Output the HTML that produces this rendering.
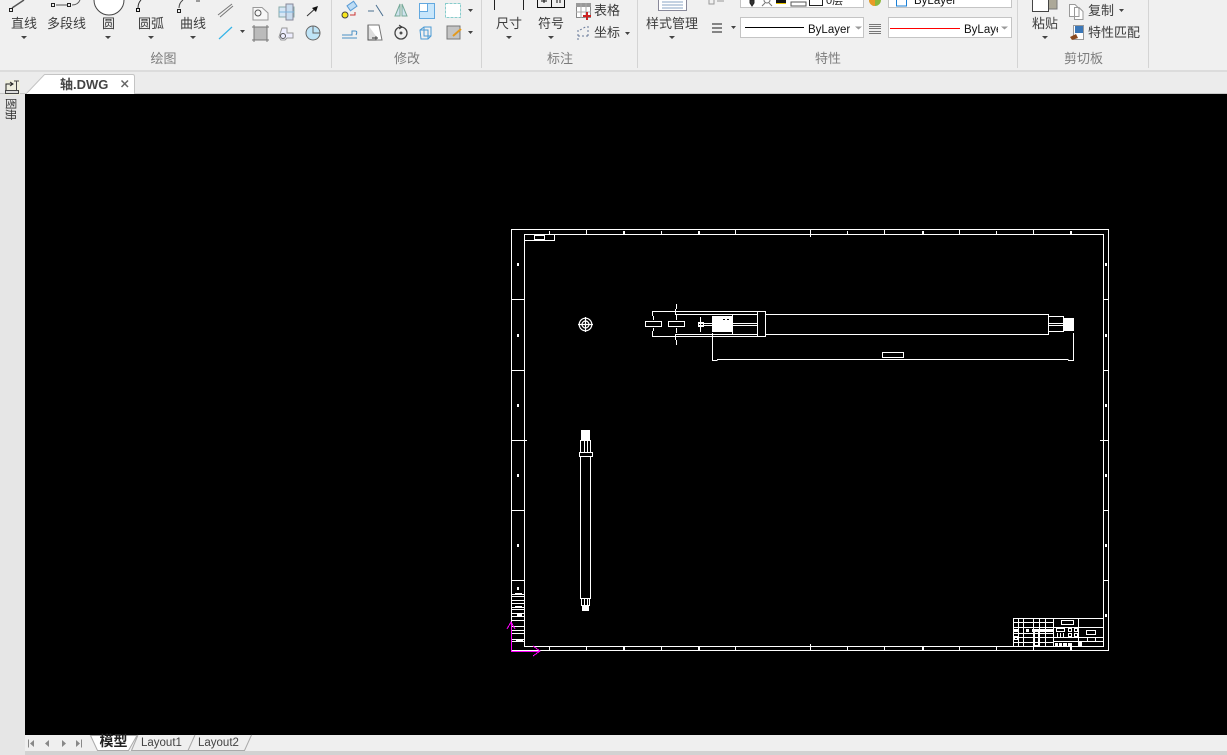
<!DOCTYPE html>
<html><head><meta charset="utf-8"><style>
html,body{margin:0;padding:0;width:1227px;height:755px;overflow:hidden;background:#f0f0f0}
svg{position:absolute;left:0;top:0;display:block}
text{font-family:"Liberation Sans","Noto Sans CJK SC",sans-serif;font-size:13px;fill:#3c3c3c}
.c{text-anchor:middle}
.g{fill:#7c7c7c}
</style></head><body>
<svg width="1227" height="755" viewBox="0 0 1227 755">
<rect width="1227" height="755" fill="#f0f0f0"/>
<!-- strip areas -->
<rect x="0" y="70" width="1227" height="2" fill="#dcdcdc"/>
<rect x="0" y="72" width="1227" height="22" fill="#ececec"/>
<rect x="0" y="94" width="25" height="661" fill="#e6e6e6"/>
<rect x="25" y="94" width="1202" height="641" fill="#000"/>
<rect x="25" y="735" width="1202" height="16" fill="#efefef"/>
<rect x="25" y="751" width="1202" height="4" fill="#d2d2d2"/>
<rect x="0" y="93" width="1227" height="1" fill="#c8c8c8"/>
<!-- separators -->
<g fill="#d4d4d4"><rect x="331" y="0" width="1" height="68"/><rect x="481" y="0" width="1" height="68"/><rect x="637" y="0" width="1" height="68"/><rect x="1017" y="0" width="1" height="68"/><rect x="1148" y="0" width="1" height="68"/></g>

<!-- labels -->
<text x="24" y="28" class="c">直线</text><text x="66.500" y="28" class="c">多段线</text><text x="108.500" y="28" class="c">圆</text><text x="151" y="28" class="c">圆弧</text><text x="193" y="28" class="c">曲线</text>
<text x="163.500" y="63" class="c g">绘图</text><text x="407" y="63" class="c g">修改</text><text x="560" y="63" class="c g">标注</text><text x="828" y="63" class="c g">特性</text><text x="1083.500" y="63" class="c g">剪切板</text>
<text x="509" y="28" class="c">尺寸</text><text x="551" y="28" class="c">符号</text><text x="672" y="28" class="c">样式管理</text><text x="1045" y="28" class="c">粘贴</text>
<text x="594" y="15">表格</text><text x="594" y="37">坐标</text><text x="1088" y="15">复制</text><text x="1088" y="37">特性匹配</text>

<!-- small arrows -->
<g fill="#444">
<path d="M21 36h6l-3 3zM105 36h6l-3 3zM148 36h6l-3 3zM190 36h6l-3 3zM240 30h5l-2.500 3zM468 9h5l-2.500 3zM468 31h5l-2.500 3zM506 36h6l-3 3zM548 36h6l-3 3zM625 32h5l-2.500 3zM669 36h6l-3 3zM731 26h5l-2.500 3zM1042 36h6l-3 3zM1119 9h5l-2.500 3z"/>
</g>

<!-- draw icons -->
<g fill="none" stroke="#555" stroke-width="1">
<path d="M12 8 L24 0" stroke-width="1.500"/><rect x="9.500" y="8.500" width="3" height="3" stroke="#222"/>
<path d="M56 5H68M72 5Q78 5 80 0" /><rect x="51.500" y="3.500" width="3" height="3" stroke="#222"/><rect x="67.500" y="3.500" width="3" height="3" stroke="#222"/>
<path d="M94 0A15 15 0 0 0 124 0" fill="#fff" stroke="#444"/>
<path d="M138 8Q138 3 141 0" stroke="#333"/><rect x="136.500" y="8.500" width="3" height="3" stroke="#111"/>
<path d="M179 8Q179 3 183 0M196 1H200" stroke="#444"/><rect x="177.500" y="9.500" width="3" height="3" stroke="#222"/>
<path d="M218 15L232 4M220 17L233 6" stroke="#777"/>
<path d="M219 39L232 27" stroke="#35b4e8" stroke-width="1.200"/>
<path d="M253 7.500H262L268 13V20H253Z" stroke="#999" fill="#f7f7f7"/><circle cx="258" cy="13" r="3"/>
<rect x="254" y="27" width="13" height="13" fill="#bbb" stroke="#777"/><path d="M252 27H269M252 40H269M254 25V42M267 25V42" stroke="#777"/>
<rect x="279" y="7" width="15" height="10" fill="#d6e6f5" stroke="#8aa"/><rect x="286" y="4" width="7" height="16" fill="#c9dcee" stroke="#889"/><path d="M279 12H294" stroke="#7ab6e0"/>
<path d="M282 28H287V33H293V38H287L285 40H281L279 37Z" fill="#eef" stroke="#999"/><circle cx="283" cy="36" r="2.500"/>
<path d="M307 16L317 7" stroke="#333"/><path d="M318 6L312 8L316 12Z" fill="#111" stroke="none"/>
<circle cx="313" cy="33" r="7" fill="#bfe4f7" stroke="#666"/><path d="M313 26V33H320" stroke="#666"/>
<!-- modify -->
<rect x="348" y="3" width="8" height="6" fill="#bcdcf5" stroke="#5a9bd5" transform="rotate(-35 352 6)"/><circle cx="345" cy="15" r="3" fill="#f8e71c" stroke="#444"/><path d="M350 15H355V12" stroke="#c33"/>
<path d="M368 11H374M376 5L383 16" stroke="#4a6f90"/>
<path d="M400 4L395 16H400ZM402 4L407 16H402Z" stroke="#7a9" fill="#cfe3ee"/>
<rect x="419.500" y="3.500" width="15" height="15" fill="#c8e6fb" stroke="#62a8df"/><rect x="419.500" y="3.500" width="8" height="8" fill="#fff" stroke="#62a8df"/>
<rect x="445.500" y="3.500" width="15" height="14" fill="#fff" stroke="#8cc" stroke-dasharray="3 1"/>
<path d="M342 38H357M342 35H352V31H355Q358 31 356 35" stroke="#4a8fc4"/>
<path d="M368 25H379L382 40H368Z" stroke="#777" fill="#fff"/><path d="M368 25V40H376V36" stroke="#555" fill="#ddd"/><path d="M372 38H378" stroke="#333"/>
<circle cx="401" cy="33" r="6" stroke="#444" stroke-width="1.300"/><circle cx="401" cy="33" r="1" fill="#333"/><path d="M399 25L402 27L399 29" stroke="#333"/>
<path d="M420 30L424 27H431V36L428 39H421ZM424 27V36H431M420 30H428V39" stroke="#4a9ad4"/>
<rect x="447" y="26" width="13" height="13" fill="#c4c4c4" stroke="#777"/><path d="M453 36L461 29" stroke="#e39a1e" stroke-width="2"/>
<!-- dim -->
<path d="M494.500 0V10M523.500 0V10" stroke="#222"/>
<path d="M537.500 0V7.500H564.500V0M551.500 0V7.500" stroke="#111"/><path d="M544 0V3M541 1H547M557 0V3M560 0V3" stroke="#111"/>
<rect x="576.500" y="3.500" width="14" height="14" fill="#fff" stroke="#888"/><rect x="576" y="3" width="15" height="4" fill="#999" stroke="none"/><path d="M581 3V18M586 3V18M576 12H591" stroke="#aaa"/><path d="M587 12V20M583 16H591" stroke="#c22" stroke-width="2"/>
<path d="M578 30V40M588 26V37M578 36H590M580 30L587 26" stroke="#679" stroke-dasharray="2 2"/>
<rect x="658.500" y="-3.500" width="28" height="14" fill="#fff" stroke="#889"/><path d="M662 2H683M662 5H683M662 8H683" stroke="#8aa4c4"/>
<!-- property -->
<path d="M709 0V4H714V0M717 1H724" stroke="#999"/>
<path d="M712 24H722M712 28H722M712 32H722" stroke="#444" stroke-width="1.200"/>
<path d="M869 24.500H881M869 26.500H881M869 28.500H881M869 31.500H881M869 33.500H881" stroke="#777"/>
</g>
<circle cx="875" cy="0" r="6" fill="#8ab83a"/><path d="M869 0a6 6 0 0 0 6 6V0z" fill="#ea9a26"/>

<!-- combos -->
<g fill="#fff" stroke="#c4c4c4">
<rect x="740.500" y="-4" width="123" height="11.500"/><rect x="888.500" y="-4" width="123" height="11.500"/>
<rect x="740.500" y="17.500" width="123" height="20"/><rect x="888.500" y="17.500" width="123" height="20"/>
</g>
<rect x="745" y="27" width="59" height="1" fill="#000"/><rect x="890" y="28" width="70" height="1" fill="#f00"/>
<text x="808" y="33" style="font-size:11.500px;fill:#111">ByLayer</text>
<svg x="964" y="18" width="34" height="20"><text x="0" y="15" style="font-size:11.500px;fill:#111">ByLayer</text></svg>
<path d="M855 26.500h7l-3.500 3zM1001 26.500h7l-3.500 3z" fill="#999"/>
<!-- combo top contents -->
<g fill="none" stroke="#222">
<path d="M750 0H754V3L752 6L750 3Z" fill="#333"/>
<circle cx="767" cy="0" r="3" stroke="#777"/><path d="M762 6L765 3M772 6L769 3"  stroke="#777"/>
<rect x="776" y="0" width="10" height="3" fill="#111" stroke="none"/><rect x="776" y="3" width="10" height="1" fill="#e6c400" stroke="none"/>
<path d="M791 2H806V6H791Z" stroke="#555"/><rect x="809.500" y="-2" width="13" height="7.500"/>
<text x="826" y="4" style="font-size:11px;fill:#222;stroke:none">0层</text>
<rect x="896.500" y="-3" width="10" height="9" stroke="#1a7fd6"/>
<text x="914" y="4" style="font-size:11.500px;fill:#111;stroke:none">ByLayer</text>
</g>
<!-- clipboard -->
<rect x="1045" y="-3" width="12" height="12" fill="#aca898" stroke="#777"/><rect x="1032.500" y="-3" width="16" height="14.500" fill="#fff" stroke="#444"/>
<path d="M1069.500 6H1075L1079 10V18H1069.500Z M1074.500 9H1079L1083 13V21H1074.500Z" fill="#fff" stroke="#999" transform="translate(0 -1.500)"/>
<rect x="1073.500" y="25.500" width="10" height="14" fill="#fff" stroke="#999"/><rect x="1075" y="26" width="8" height="7" fill="#3a77b8"/><path d="M1070 37L1076 34L1078 38L1072 40Z" fill="#8a4a20"/>

<!-- tab -->
<path d="M26.500 93.500L44.500 74.500H132.500Q134.500 74.500 134.500 76.500V93.500" fill="#fff" stroke="#c4c4c4"/>
<rect x="27" y="93" width="107" height="1" fill="#fff"/>
<text x="60" y="89" style="font-size:13px;font-weight:bold;fill:#444">轴.DWG</text>
<path d="M121.500 80.500L128 87M128 80.500L121.500 87" stroke="#666" stroke-width="1.500" fill="none"/>
<!-- left vertical tab -->
<g fill="none" stroke="#444"><rect x="5" y="80" width="15" height="15" fill="#eeeedd" stroke="none"/><path d="M6 90V84H12M10 82L13 84L10 86" stroke="#222"/><path d="M14 81H19M16.500 81V90"/><rect x="5.500" y="90.500" width="13" height="3" fill="#ddd"/></g>
<text transform="translate(6.500 98) rotate(90) scale(1 1)" x="0" y="0" style="font-size:12px;fill:#333" dominant-baseline="auto"></text>
<text transform="translate(7 98) rotate(90)" style="font-size:11.500px;fill:#333">图</text>
<text transform="translate(7 109) rotate(90)" style="font-size:11.500px;fill:#333">册</text>

<!-- bottom tabs -->
<g fill="#888"><path d="M28 739.500h1v8h-1zM34 740v7l-4-3.500zM49 740v7l-4-3.500zM62 740l4 3.500-4 3.500zM76 740l4 3.500-4 3.500zM81 739.500h1v8h-1z"/></g>
<path d="M90.500 735.500L97.500 750.500H128.500L137 735.500Z" fill="#fff" stroke="#aaa"/>
<path d="M131.500 750.500L138 735M188 750.500L195 735M188 750.500L191 744M244.500 750.500L251.500 735M131 750.500H245" stroke="#aaa" fill="none"/>
<text x="99.500" y="746" style="font-size:14px;font-weight:bold;fill:#222">模型</text>
<text x="141" y="746" style="font-size:11.500px;fill:#444">Layout1</text><text x="198" y="746" style="font-size:11.500px;fill:#444">Layout2</text>

<!-- DRAWING -->
<g fill="none" stroke="#fff" stroke-width="1" shape-rendering="crispEdges">
<rect x="511.500" y="229.500" width="597" height="421"/>
<rect x="524.500" y="234.500" width="579" height="412"/>
<rect x="524.500" y="234.500" width="30" height="6"/><rect x="534.500" y="235.500" width="10" height="4"/>
<!-- ticks -->
<path d="M549.500 231V234M586.500 230V234M661.500 231V234M735.500 230V234M810.500 230V237M847.500 231V234M884.500 230V234M959.500 230V234M996.500 231V234M1033.500 230V234M549.500 647V650M586.500 647V650M661.500 647V650M735.500 647V650M810.500 644V650M847.500 647V650M884.500 647V650M959.500 647V650M996.500 647V650M1033.500 643V650M1071.500 643V650"/>
<path d="M512 299.500H524M512 370.500H524M512 440.500H527M512 510.500H524M512 580.500H524M1104 299.500H1108M1104 370.500H1108M1100 440.500H1108M1104 510.500H1108M1104 580.500H1108"/>
<!-- left strip -->
<path d="M512 594.500H524M512 596.500H524M512 600.500H524M512 603.500H524M512 607.500H524M512 609.500H524M512 613.500H524M512 616.500H524M512 620.500H524M512 626.500H524M512 630.500H524M512 633.500H524M512 639.500H524M512 641.500H524"/>
<!-- horizontal shaft -->
<path d="M652.500 316V311.500H765.500V336.500H652.500V331M653.500 316V320M653.500 328V331"/>
<rect x="645.500" y="321.500" width="16" height="5"/><rect x="668.500" y="321.500" width="16" height="5"/>
<path d="M676.500 304V309M675.500 309V314M676.500 315V320M676.500 328V333M675.500 334V340M676.500 340V345"/>
<path d="M675 314.500H757M675 334.500H757M675 311.500H765M757.500 312V336M732.500 314V334M700.500 317V332M698 323.500H757M698 325.500H757"/>
<rect x="698.500" y="322.500" width="5" height="4"/>
<path d="M766 314.500H1048.500V334.500H766"/>
<rect x="1048.500" y="316.500" width="15" height="15"/><path d="M1049 323.500H1063M1049 325.500H1063"/>
<path d="M712.500 333V360.500H717.500M717 359.500H1068.500M1068 360.500H1073.500V333"/>
<rect x="882.500" y="352.500" width="21" height="5"/>
<!-- vertical shaft -->
<rect x="580.500" y="440.500" width="10" height="12"/><path d="M584.500 441V452M587.500 441V452"/>
<rect x="579.500" y="452.500" width="13" height="4"/>
<rect x="580.500" y="456.500" width="10" height="142"/>
<rect x="581.500" y="598.500" width="8" height="7"/><path d="M584.500 599V605M587.500 599V605"/>
<!-- title block -->
<rect x="1013.500" y="618.500" width="90" height="28"/>
<path d="M1053.500 619V646M1078.500 619V646M1013.500 622.500H1053M1013.500 627.500H1053M1013.500 633.500H1053M1013.500 637.500H1053M1013.500 642.500H1053M1018.500 619V646M1023.500 619V646M1033.500 619V646M1039.500 619V646M1045.500 619V646M1053 627.500H1103M1053 637.500H1103M1053 641.500H1103M1057.500 633V637M1060.500 633V637M1063.500 633V637M1087.500 637V641M1095.500 637V641"/>
<rect x="1061.500" y="620.500" width="12" height="4"/><rect x="1086.500" y="630.500" width="9" height="4"/><rect x="1056.500" y="628.500" width="8" height="3"/><rect x="1068.500" y="628.500" width="3" height="3"/><rect x="1074.500" y="628.500" width="3" height="3"/><rect x="1068.500" y="633.500" width="3" height="3"/><rect x="1074.500" y="633.500" width="3" height="3"/>
<rect x="1034.500" y="629.500" width="4" height="16"/><rect x="1014.500" y="636.500" width="3" height="3"/>
</g>
<!-- crosshair -->
<g fill="none" stroke="#fff" stroke-width="1.200">
<circle cx="585.500" cy="324.500" r="6.300"/><circle cx="585.500" cy="324.500" r="3.500"/><path d="M578 324.500H593M585.500 317V332"/>
</g>
<g fill="#fff" shape-rendering="crispEdges">
<path d="M517 263h2v3h-2zM517 334h2v3h-2zM517 404h2v3h-2zM517 474h2v3h-2zM517 544h2v3h-2zM517 587h2v3h-2zM1105 263h2v3h-2zM1105 334h2v3h-2zM1105 404h2v3h-2zM1105 474h2v3h-2zM1105 544h2v3h-2zM1105 614h2v3h-2z"/>
<path d="M623 231h2v3h-2zM698 231h2v3h-2zM922 231h2v3h-2zM1070 231h2v3h-2zM623 647h2v3h-2zM698 647h2v3h-2zM922 647h2v3h-2zM1070 647h2v3h-2z"/>
<rect x="712" y="316" width="20" height="16"/>
<rect x="1063" y="318" width="11" height="13"/>
<rect x="581" y="430" width="9" height="10"/>
<rect x="582" y="605" width="7" height="6"/>
<path d="M515 593h7v1h-7zM515 606h7v1h-7zM517 613h5v3h-5zM516 639h7v2h-7zM1014 629h4v3h-4zM1026 629h3v3h-3zM1032 629h6v3h-6zM1040 629h7v3h-7zM1047 629h6v3h-6zM1055 643h3v3h-3zM1059 643h3v3h-3zM1063 643h4v3h-4zM1068 643h3v3h-3zM1079 642h3v4h-3z"/>
</g>
<rect x="723" y="319" width="2" height="1" fill="#000"/><rect x="727" y="319" width="2" height="1" fill="#000"/>
<!-- UCS -->
<g fill="none" stroke="#f0f" stroke-width="1" shape-rendering="crispEdges">
<path d="M511.500 622V651.500H540M507 629L511 622L515 629M533 646L540 651L533 656"/>
</g>
</svg>
</body></html>
